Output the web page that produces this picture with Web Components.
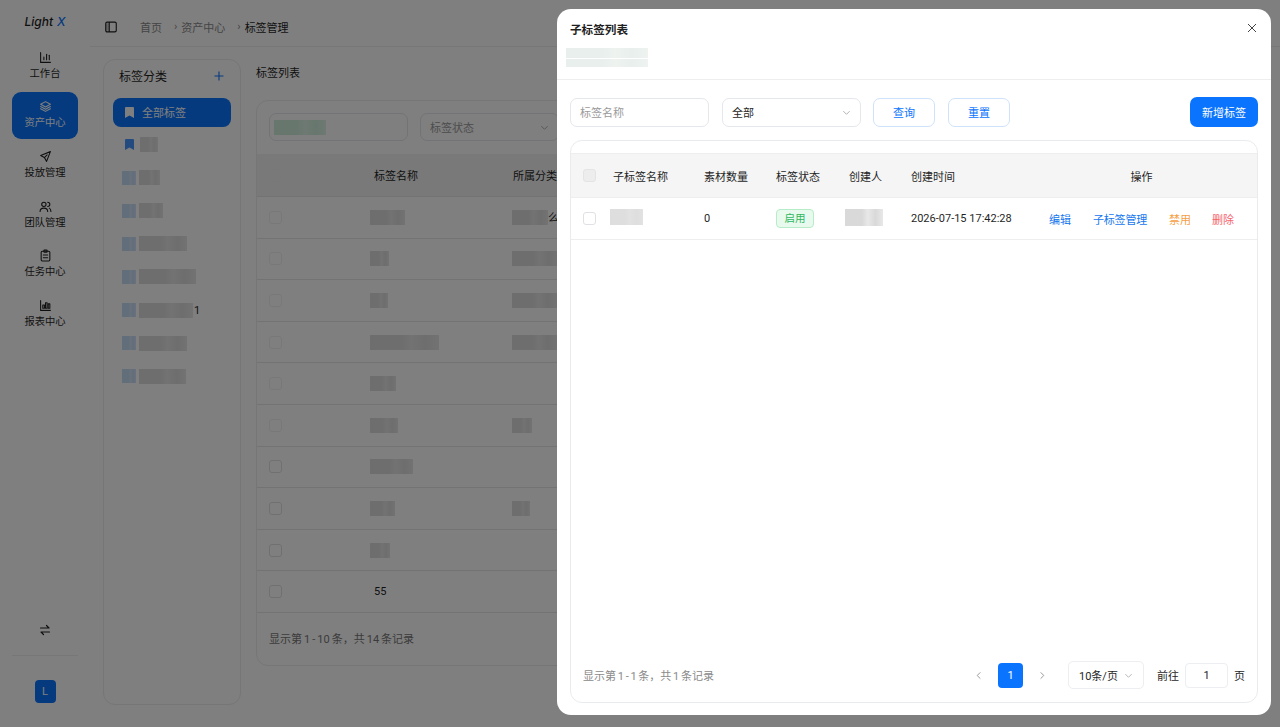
<!DOCTYPE html>
<html lang="zh">
<head>
<meta charset="utf-8">
<title>标签管理</title>
<style>
  html, body { margin: 0; height: 100%; overflow: hidden; }
  body { font-family: Roboto, "Noto Sans CJK SC", sans-serif; font-size: 11px; color: #1f1f1f; background: #fff; }
</style>
</head>
<body>
<app-shell></app-shell>
<script>
const BLUE = '#0a74ff';

// censored bits of the screenshot: a pixelly grey block
class BlurBlock extends HTMLElement {
  connectedCallback() {
    if (!this.shadowRoot) this.attachShadow({ mode: 'open' });
    const w = this.getAttribute('w') || 30;
    const h = this.getAttribute('h') || 15;
    const c = this.getAttribute('c') || '#dcdcdc';
    const c2 = this.getAttribute('c2') || '#e6e6e6';
    this.shadowRoot.innerHTML = `<style>
      :host { display: inline-block; width: ${w}px; height: ${h}px; flex: none;
        background: linear-gradient(90deg, ${c} 0 45%, ${c2} 60%, ${c} 80%, ${c2} 100%); }
    </style>`;
  }
}
customElements.define('blur-block', BlurBlock);

class CheckBox extends HTMLElement {
  constructor() {
    super();
    this.attachShadow({ mode: 'open' });
    this.shadowRoot.innerHTML = `<style>
      :host { display: inline-block; width: 11px; height: 11px; border: 1px solid #dfe1e5; border-radius: 3px; background: #fff; flex: none; }
      :host([muted]) { background: #ededed; border-color: #e4e4e4; }
      :host([faint]) { background: transparent; border-color: #f1f1f1; }
    </style>`;
  }
}
customElements.define('check-box', CheckBox);

class NavItem extends HTMLElement {
  constructor() {
    super();
    this.attachShadow({ mode: 'open' });
    this.shadowRoot.innerHTML = `<style>
      :host { display: flex; flex-direction: column; align-items: center; justify-content: center; gap: 3px;
        width: 66px; height: 47px; border-radius: 9px; font-size: 10.3px; line-height: 14px; color: #1f1f1f; }
      :host([active]) { background: ${BLUE}; color: #fff; }
      ::slotted(svg) { display: block; }
    </style><slot name="icon"></slot><slot></slot>`;
  }
}
customElements.define('nav-item', NavItem);

class SideBar extends HTMLElement {
  constructor() {
    super();
    this.attachShadow({ mode: 'open' });
    const s = 'width="13" height="13" viewBox="0 0 24 24" fill="none" stroke="currentColor" stroke-width="2" stroke-linecap="round" stroke-linejoin="round" slot="icon"';
    this.shadowRoot.innerHTML = `<style>
      :host { display: flex; flex-direction: column; align-items: center; width: 90px; flex: none; box-sizing: border-box; height: 727px; }
      .logo { height: 42px; display: flex; align-items: center; justify-content: center; font: italic 500 12px Inter, sans-serif; width: 100%; }
      .logo b { color: ${BLUE}; font-weight: 500; margin-left: 4px; }
      nav { display: flex; flex-direction: column; gap: 2.7px; }
      .grow { flex: 1; }
      .swap { height: 28px; display: flex; align-items: center; justify-content: center; }
      .rule { width: 66px; border-top: 1px solid #eee; margin: 11px 0 24px; }
      .avatar { width: 21px; height: 23px; border-radius: 4px; background: ${BLUE}; color: #fff; font-size: 11px; display: flex; align-items: center; justify-content: center; margin-bottom: 24px; }
    </style>
    <div class="logo">Light<b>X</b></div>
    <nav>
      <nav-item><svg ${s}><path d="M3 3v18h18"/><path d="M9 16v-5"/><path d="M14 16V6"/><path d="M19 16v-8"/></svg>工作台</nav-item>
      <nav-item active><svg ${s}><path d="M12 3 3 8l9 5 9-5z"/><path d="m3 12 9 5 9-5"/><path d="m3 16 9 5 9-5"/></svg>资产中心</nav-item>
      <nav-item><svg ${s}><path d="M21 3 3 10l7 4 4 7z"/><path d="m10 14 5-5"/></svg>投放管理</nav-item>
      <nav-item><svg ${s}><circle cx="9" cy="8" r="4"/><path d="M2 21c0-4 3-6 7-6s7 2 7 6"/><path d="M16 4a4 4 0 0 1 0 8"/><path d="M19 15c2 1 3 3 3 6"/></svg>团队管理</nav-item>
      <nav-item><svg ${s}><rect x="4" y="4" width="16" height="18" rx="2"/><rect x="9" y="2" width="6" height="4" rx="1"/><path d="M8 11h8M8 16h8"/></svg>任务中心</nav-item>
      <nav-item><svg ${s}><path d="M3 3v18h18"/><rect x="7" y="11" width="3" height="6"/><rect x="12" y="7" width="3" height="10"/><rect x="17" y="9" width="3" height="8"/></svg>报表中心</nav-item>
    </nav>
    <div class="grow"></div>
    <div class="swap"><svg width="12" height="12" viewBox="0 0 24 24" fill="none" stroke="#1f1f1f" stroke-width="2.4" stroke-linecap="round" stroke-linejoin="round"><path d="M3 8h17l-5-5"/><path d="M21 16H4l5 5"/></svg></div>
    <div class="rule"></div>
    <div class="avatar">L</div>`;
  }
}
customElements.define('side-bar', SideBar);

class TopBar extends HTMLElement {
  constructor() {
    super();
    this.attachShadow({ mode: 'open' });
    this.shadowRoot.innerHTML = `<style>
      :host { display: flex; align-items: center; border-bottom: 1px solid #eee; padding: 7px 0 0 15px; box-sizing: border-box; height: 47px; font-size: 11px; color: #8a8a8a; }
      svg { margin-right: 23px; flex: none; }
      span { white-space: nowrap; }
      i { font-style: normal; margin: 0 4px 0 12px; font-size: 11px; }
      .now { color: #1f1f1f; }
    </style>
    <svg width="12" height="12" viewBox="0 0 13 13" fill="none" stroke="#1f1f1f" stroke-width="1.2"><rect x=".8" y="1.2" width="11.4" height="10.6" rx="1.5"/><path d="M4.6 1.2v10.6"/><path d="M1 2.5h3.2v8H1z" fill="#1f1f1f" stroke="none" opacity=".25"/></svg>
    <span>首页</span><i>›</i><span>资产中心</span><i>›</i><span class="now">标签管理</span>`;
  }
}
customElements.define('top-bar', TopBar);

class CategoryPanel extends HTMLElement {
  constructor() {
    super();
    this.attachShadow({ mode: 'open' });
    const rows = [[18, 0], [21, 0], [24, 0], [48, 0], [57, 0], [54, 1], [48, 0], [47, 0]];
    const html = rows.map(([w, one], i) => `<div class="row">
        ${i === 0
          ? `<svg class="mark" width="9" height="11" viewBox="0 0 9 11"><path d="M0 1a1 1 0 0 1 1-1h7a1 1 0 0 1 1 1v10L4.5 8.4 0 11z" fill="${BLUE}" opacity=".75"/></svg>`
          : '<blur-block class="sq" w="14" h="14" c="#c6dcf6" c2="#d2e3f8"></blur-block>'}
        <blur-block w="${w}" h="15"></blur-block>${one ? '<span class="one">1</span>' : ''}
      </div>`).join('');
    this.shadowRoot.innerHTML = `<style>
      :host { display: block; width: 138px; height: 646px; flex: none; box-sizing: border-box; border: 1px solid #ececec; border-radius: 12px; padding: 0 9px; }
      .head { display: flex; justify-content: space-between; align-items: center; height: 38px; padding: 0 7px 7px 6px; box-sizing: border-box; font-size: 12px; }
      .all { display: flex; align-items: center; gap: 8px; height: 29px; border-radius: 8px; background: ${BLUE}; color: #fff; padding: 0 0 1px 12px; box-sizing: border-box; }
      .all svg { flex: none; }
      .list { margin-top: 1px; }
      .row { display: flex; align-items: center; gap: 3px; height: 33.1px; padding-left: 9px; font-size: 11px; }
      .mark { margin: 0 3px 0 3px; }
      .one { margin-left: -2px; }
    </style>
    <div class="head"><span>标签分类</span><svg width="10" height="10" viewBox="0 0 10 10" stroke="${BLUE}" stroke-width="1.1" fill="none"><path d="M5 .5v9M.5 5h9"/></svg></div>
    <div class="all"><svg width="9" height="11" viewBox="0 0 9 11"><path d="M0 1a1 1 0 0 1 1-1h7a1 1 0 0 1 1 1v10L4.5 8.4 0 11z" fill="#fff"/></svg>全部标签</div>
    <div class="list">${html}</div>`;
  }
}
customElements.define('category-panel', CategoryPanel);

// toolbar fields, used both behind and in the dialog
class FieldBox extends HTMLElement {
  constructor() {
    super();
    this.attachShadow({ mode: 'open' });
    this.shadowRoot.innerHTML = `<style>
      :host { display: flex; align-items: center; justify-content: space-between; box-sizing: border-box; width: 139px; height: 29px; border: 1px solid #e4e7ec; border-radius: 7px; padding: 0 9px; background: #fff; font-size: 11px; flex: none; }
      :host([placeholder]) { color: #9a9a9a; }
      svg { display: none; }
      :host([select]) svg { display: block; }
    </style><span><slot></slot></span>
    <svg width="9" height="9" viewBox="0 0 10 10" fill="none" stroke="#a8a8a8" stroke-width="1"><path d="m1.5 3.5 3.5 3.5 3.5-3.5"/></svg>`;
  }
}
customElements.define('field-box', FieldBox);

class TagTable extends HTMLElement {
  constructor() {
    super();
    this.attachShadow({ mode: 'open' });
    const data = [[35, 36], [19, 46], [18, 45], [69, 45], [26, 0], [28, 20], [43, 0], [25, 18], [20, 0]];
    // the odd tail glyphs poking out under the dialog's left edge
    const tails = ['么', '集', '长', '片'];
    const rows = data.map(([a, b], i) => `<div class="tr">
        <div class="ck"><check-box ${i < 6 ? 'faint' : ''}></check-box></div>
        <div class="a"><blur-block w="${a}" h="15"></blur-block></div>
        <div class="b">${b ? `<blur-block w="${b}" h="15"></blur-block>` : ''}${tails[i] ? `<span>${tails[i]}</span>` : ''}</div>
      </div>`).join('');
    this.shadowRoot.innerHTML = `<style>
      :host { display: block; flex: 1; min-width: 0; }
      h3 { margin: 0; font-weight: 400; font-size: 11px; line-height: 29px; height: 41px; }
      .card { width: 700px; height: 566px; border: 1px solid #ececec; border-radius: 12px; box-sizing: border-box; }
      .filters { display: flex; gap: 12px; padding: 12px 12px; height: 53px; box-sizing: border-box; }
      .filters field-box { height: 28px; }
      .filters blur-block { margin-left: -5px; display: block; }
      .tr, .th { display: grid; grid-template-columns: 117px 139px 1fr; align-items: center; border-bottom: 1px solid #e6e6e6; height: 41.6px; box-sizing: border-box; }
      .th { background: #f3f3f3; height: 43px; }
      .ck { padding-left: 12px; display: flex; }
      .b { display: flex; align-items: center; white-space: nowrap; margin-left: -1px; }
      .a { display: flex; align-items: center; margin-left: -4px; }
      .foot { padding: 17px 12px; color: #777; font-size: 11px; word-spacing: -.7px; }
    </style>
    <h3>标签列表</h3>
    <div class="card">
      <div class="filters">
        <field-box><blur-block w="52" h="15" c="#cfeedd" c2="#dcf3e6"></blur-block></field-box>
        <field-box select placeholder>标签状态</field-box>
      </div>
      <div class="th"><div class="ck"><check-box faint></check-box></div><div>标签名称</div><div>所属分类</div></div>
      ${rows}
      <div class="tr"><div class="ck"><check-box></check-box></div><div>55</div><div></div></div>
      <div class="foot">显示第 1 - 10 条，共 14 条记录</div>
    </div>`;
  }
}
customElements.define('tag-table', TagTable);

class SubTable extends HTMLElement {
  constructor() {
    super();
    this.attachShadow({ mode: 'open' });
    this.shadowRoot.innerHTML = `<style>
      :host { display: flex; flex-direction: column; flex: 1; min-height: 0; border: 1px solid #e9ecef; border-radius: 12px; margin-top: 13px; padding-top: 12px; box-sizing: border-box; }
      .th, .tr { display: grid; grid-template-columns: 42px 91px 72px 73px 62px 133px 1fr; align-items: center; box-sizing: border-box; border-bottom: 1px solid #eee; }
      .th { height: 45px; background: #f5f5f5; border-top: 1px solid #eee; }
      .tr { height: 42px; }
      .ck { padding-left: 12px; display: flex; }
      .ops-h { text-align: center; padding-right: 18px; }
      .ops { display: flex; gap: 22px; padding-left: 5px; white-space: nowrap; }
      .ops span { color: #1677ee; }
      .ops .warn { color: #f5a043; }
      .ops .del { color: #f4646b; margin-left: -1px; }
      .ops .sub { letter-spacing: -.2px; }
      .badge { display: inline-block; width: 38px; height: 19px; line-height: 17px; box-sizing: border-box; text-align: center; background: #e8f9ee; border: 1px solid #b7ecc9; border-radius: 4px; color: #2fb760; font-size: 10.5px; }
      .grow { flex: 1; }
      .foot { display: flex; align-items: center; height: 54px; padding: 0 12px; color: #8a8a8a; }
      .count { word-spacing: -1px; }
      .pager { display: flex; align-items: center; color: #1f1f1f; }
      .page { width: 25px; height: 25px; border-radius: 4px; background: ${BLUE}; color: #fff; display: flex; align-items: center; justify-content: center; margin: 0 15px; }
      .arrow { display: block; }
      .size { display: flex; align-items: center; justify-content: space-between; box-sizing: border-box; width: 76px; height: 28px; border: 1px solid #eceef1; border-radius: 5px; padding: 0 10px; margin: 0 13px 0 22px; }
      .go { width: 43px; height: 25px; box-sizing: border-box; border: 1px solid #eceef1; border-radius: 4px; display: flex; align-items: center; justify-content: center; margin: 0 6px; }
      .spacer { flex: 1; }
    </style>
    <div class="th">
      <div class="ck"><check-box muted></check-box></div>
      <div>子标签名称</div><div>素材数量</div><div>标签状态</div><div>创建人</div><div>创建时间</div><div class="ops-h">操作</div>
    </div>
    <div class="tr">
      <div class="ck"><check-box></check-box></div>
      <div><blur-block w="33" h="16" c="#dedede" c2="#e2e2e2" style="margin-left:-3px"></blur-block></div>
      <div>0</div>
      <div><span class="badge">启用</span></div>
      <div><blur-block w="38" h="17" c="#d9d9d9" c2="#e8e8e8" style="margin-left:-4px"></blur-block></div>
      <div>2026-07-15 17:42:28</div>
      <div class="ops"><span>编辑</span><span class="sub">子标签管理</span><span class="warn">禁用</span><span class="del">删除</span></div>
    </div>
    <div class="grow"></div>
    <div class="foot">
      <span class="count">显示第 1 - 1 条，共 1 条记录</span>
      <span class="spacer"></span>
      <div class="pager">
        <svg class="arrow" width="8" height="9" viewBox="0 0 8 10" fill="none" stroke="#999" stroke-width="1.1"><path d="M5.5 1.5 2 5l3.5 3.5"/></svg>
        <div class="page">1</div>
        <svg class="arrow" width="8" height="9" viewBox="0 0 8 10" fill="none" stroke="#999" stroke-width="1.1"><path d="M2.5 1.5 6 5 2.5 8.5"/></svg>
        <div class="size"><span>10条/页</span><svg width="9" height="9" viewBox="0 0 10 10" fill="none" stroke="#b0b0b0" stroke-width="1"><path d="m1.5 3.5 3.5 3.5 3.5-3.5"/></svg></div>
        <span>前往</span><div class="go">1</div><span>页</span>
      </div>
    </div>`;
  }
}
customElements.define('sub-table', SubTable);

class SubTagDialog extends HTMLElement {
  constructor() {
    super();
    this.attachShadow({ mode: 'open' });
    this.shadowRoot.innerHTML = `<style>
      :host { position: absolute; left: 557px; top: 9px; width: 714px; height: 706px; background: #fff; border-radius: 14px; display: flex; flex-direction: column; box-sizing: border-box; }
      header { height: 71px; border-bottom: 1px solid #eee; box-sizing: border-box; padding: 13px 13px 0 13px; position: relative; flex: none; }
      h2 { margin: 0; font-size: 11.6px; font-weight: 600; line-height: 17px; }
      .sub { display: flex; flex-direction: column; gap: 1px; margin: 9px 0 0 -4px; }
      .sub blur-block { display: block; }
      .close { position: absolute; right: 14px; top: 14px; }
      .body { flex: 1; min-height: 0; display: flex; flex-direction: column; padding: 17px 13px 12px; }
      .tools { display: flex; align-items: center; gap: 13px; flex: none; }
      .btn { width: 62px; height: 29px; box-sizing: border-box; border: 1px solid #cfe2fb; border-radius: 7px; color: ${BLUE}; display: flex; align-items: center; justify-content: center; }
      .first { margin-left: -1px; }
      .grow { flex: 1; }
      .primary { width: 68px; height: 30px; border-radius: 7px; background: ${BLUE}; color: #fff; display: flex; align-items: center; justify-content: center; }
    </style>
    <header>
      <h2>子标签列表</h2>
      <div class="sub">
        <blur-block w="82" h="10" c="#e8efec" c2="#eef3f0"></blur-block>
        <blur-block w="82" h="8" c="#e8efec" c2="#eef3f0"></blur-block>
      </div>
      <svg class="close" width="10" height="10" viewBox="0 0 10 10" stroke="#444" stroke-width="1" fill="none"><path d="m1 1 8 8M9 1 1 9"/></svg>
    </header>
    <div class="body">
      <div class="tools">
        <field-box placeholder>标签名称</field-box>
        <field-box select>全部</field-box>
        <div class="btn first">查询</div>
        <div class="btn">重置</div>
        <span class="grow"></span>
        <div class="primary">新增标签</div>
      </div>
      <sub-table></sub-table>
    </div>`;
  }
}
customElements.define('sub-tag-dialog', SubTagDialog);

class AppShell extends HTMLElement {
  constructor() {
    super();
    this.attachShadow({ mode: 'open' });
    this.shadowRoot.innerHTML = `<style>
      :host { display: flex; width: 1280px; height: 727px; position: relative; overflow: hidden; }
      main { flex: 1; min-width: 0; }
      .content { display: flex; gap: 15px; padding: 12px 0 0 13px; }
      .mask { position: absolute; inset: 0; background: rgba(0,0,0,.5); }
    </style>
    <side-bar></side-bar>
    <main>
      <top-bar></top-bar>
      <div class="content"><category-panel></category-panel><tag-table></tag-table></div>
    </main>
    <div class="mask"></div>
    <sub-tag-dialog></sub-tag-dialog>`;
  }
}
customElements.define('app-shell', AppShell);
</script>
</body>
</html>
